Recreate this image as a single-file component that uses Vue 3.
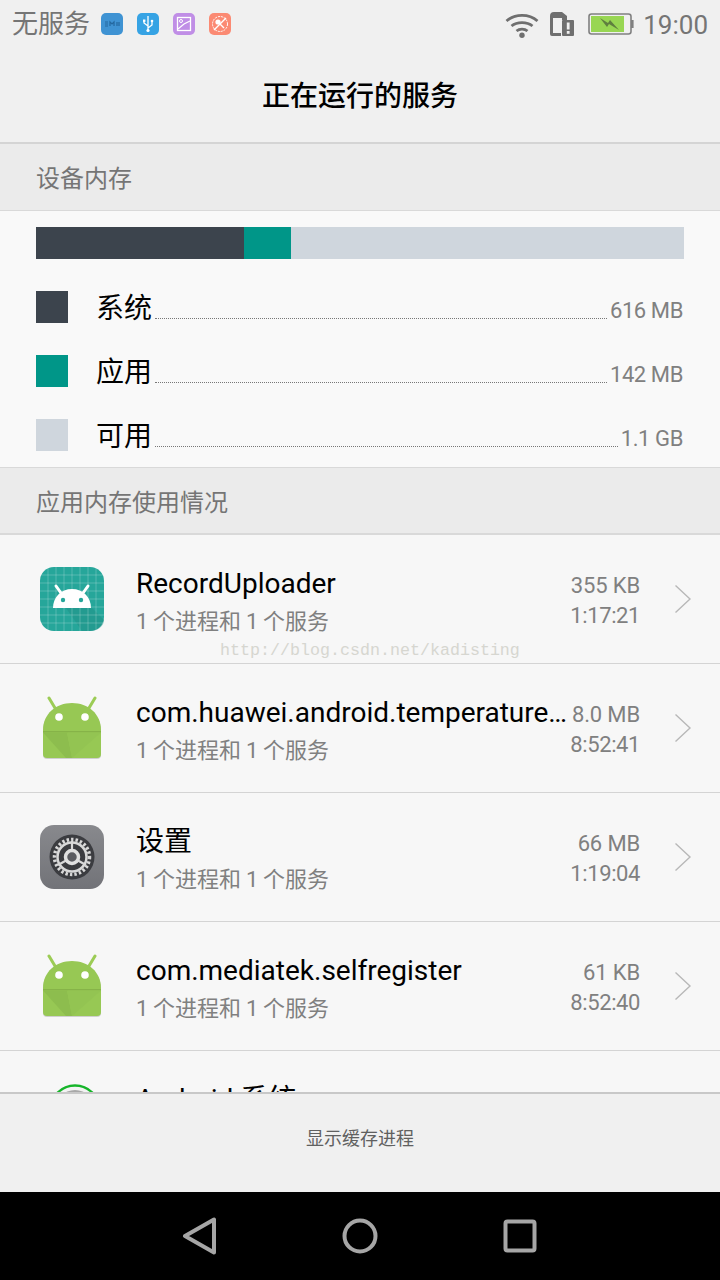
<template>
  <div class="phone">
    <div class="status-bar">
      <span class="carrier">无服务</span>
      <div class="notif-icons">
        <svg class="notif" viewBox="0 0 24 24" width="24" height="24">
          <rect x="1" y="1" width="22" height="22" rx="5" fill="#3f93d3"/>
          <path d="M5 10h3M5 12h3M5 14h3M10 14v-4l2 2 2-2v4M17 10v4M19 10v4" stroke="#24689f" stroke-width="1.2" fill="none"/>
        </svg>
        <svg class="notif" viewBox="0 0 24 24" width="24" height="24">
          <rect x="1" y="1" width="22" height="22" rx="5" fill="#36a3e4"/>
          <path d="M12 4v15M12 14l-4-3V9M12 16l4-3v-3" stroke="#fff" stroke-width="1.3" fill="none"/>
          <circle cx="12" cy="18.5" r="1.6" fill="#fff"/>
          <rect x="7" y="7.5" width="2.4" height="2.4" fill="#fff"/>
          <circle cx="16" cy="9" r="1.3" fill="#fff"/>
        </svg>
        <svg class="notif" viewBox="0 0 24 24" width="24" height="24">
          <rect x="1" y="1" width="22" height="22" rx="5" fill="#c08ee6"/>
          <rect x="5.5" y="5.5" width="13" height="13" fill="none" stroke="#fff" stroke-width="1.3"/>
          <circle cx="9" cy="9" r="1.5" fill="none" stroke="#fff" stroke-width="1"/>
          <path d="M6 17l6-5 6-3" stroke="#fff" stroke-width="1.2" fill="none"/>
        </svg>
        <svg class="notif" viewBox="0 0 24 24" width="24" height="24">
          <rect x="1" y="1" width="22" height="22" rx="5" fill="#fb8a73"/>
          <circle cx="12" cy="12" r="7.5" fill="none" stroke="#fff" stroke-width="1" stroke-dasharray="2 1"/>
          <circle cx="10" cy="10" r="2.6" fill="#fff"/>
          <path d="M11 11l5 5M6 18L18 6" stroke="#fff" stroke-width="1.4"/>
        </svg>
      </div>
      <div class="status-right">
        <svg class="wifi" viewBox="0 0 34 26" width="34" height="26">
          <path d="M1.5 9C10 1.5 24 1.5 32.5 9M6.5 14C12 9.5 22 9.5 27.5 14M11.5 19C14.5 16.5 19.5 16.5 22.5 19" stroke="#6f6f6f" stroke-width="2.8" fill="none"/>
          <circle cx="17" cy="23.2" r="2.7" fill="#6f6f6f"/>
        </svg>
        <svg class="sim" viewBox="0 0 24 24" width="24" height="24">
          <path d="M4 0h8l5 4v4h-6v16H2a2 2 0 0 1-2-2V4a4 4 0 0 1 4-4z" fill="#6f6f6f"/>
          <rect x="3" y="6" width="9" height="15" fill="#f0f0f0"/>
          <rect x="12" y="8" width="12" height="16" rx="1" fill="#6f6f6f"/>
          <rect x="16.8" y="10.5" width="2.8" height="7" fill="#f0f0f0"/>
          <rect x="16.8" y="19" width="2.8" height="2.8" fill="#f0f0f0"/>
        </svg>
        <svg class="battery" viewBox="0 0 46 22" width="46" height="22">
          <rect x="1" y="1" width="42" height="20" rx="2.5" fill="none" stroke="#808080" stroke-width="1.6"/>
          <rect x="3" y="3" width="33" height="16" fill="#98d653"/>
          <path d="M43 7h2.6v8H43z" fill="#808080"/>
          <path d="M12 5l8 5 2-3 9 10-10-6-2 3z" fill="#5f7f3f"/>
        </svg>
        <span class="clock">19:00</span>
      </div>
    </div>

    <div class="title-bar">正在运行的服务</div>

    <div class="section-head section-head-1">设备内存</div>
    <div class="memory">
      <div class="mem-bar">
        <div class="seg seg-system"></div>
        <div class="seg seg-app"></div>
        <div class="seg seg-free"></div>
      </div>
      <div v-for="m in memory" :key="m.label" class="mem-row">
        <span class="swatch" :class="m.cls"></span>
        <span class="mem-label">{{ m.label }}</span>
        <span class="dots"></span>
        <span class="mem-value">{{ m.value }}</span>
      </div>
    </div>

    <div class="section-head section-head-2">应用内存使用情况</div>

    <div class="list">
      <div v-for="app in apps" :key="app.name" class="row">
        <div class="app-icon">
          <svg v-if="app.icon === 'teal'" viewBox="0 0 64 64" width="64" height="64">
            <rect x="0" y="0" width="64" height="64" rx="14" fill="#26a69a"/>
            <path d="M26 41h26l12 12v0a14 11 0 0 1-14 11H42z" fill="#1f8f85" opacity=".5"/>
            <path d="M8 0v64M16 0v64M24 0v64M32 0v64M40 0v64M48 0v64M56 0v64M0 8h64M0 16h64M0 24h64M0 32h64M0 40h64M0 48h64M0 56h64" stroke="#fff" stroke-opacity=".22" stroke-width="1"/>
            <path d="M13 41c0-11 8-19 19-19s19 8 19 19z" fill="#fff"/>
            <path d="M21 26l-5-7M43 26l5-7" stroke="#fff" stroke-width="3" stroke-linecap="round"/>
            <circle cx="23" cy="33" r="2.2" fill="#26a69a"/>
            <circle cx="41" cy="33" r="2.2" fill="#26a69a"/>
          </svg>
          <svg v-else-if="app.icon === 'droid'" viewBox="0 0 64 64" width="64" height="64">
            <path d="M15 12L9 2M49 12l6-10" stroke="#9ccc55" stroke-width="3" stroke-linecap="round"/>
            <path d="M3 35C3 19 16 8 32 8s29 11 29 27v24a4 4 0 0 1-4 4H7a4 4 0 0 1-4-4z" fill="#cfcfcf"/>
            <path d="M3 34C3 18 16 7 32 7s29 11 29 27v24a4 4 0 0 1-4 4H7a4 4 0 0 1-4-4z" fill="#97c854"/>
            <path d="M3 35h58v1.5H3z" fill="#86b348"/>
            <path d="M3 36.500h24L32 62H26z" fill="#8dbd4e"/>
            <path d="M27 36.500h34L32 62z" fill="#93c452"/>
            <circle cx="19" cy="21" r="3.8" fill="#fff"/>
            <circle cx="45" cy="21" r="3.8" fill="#fff"/>
          </svg>
          <svg v-else viewBox="0 0 64 64" width="64" height="64">
            <defs>
              <linearGradient id="gear-bg" x1="0" y1="0" x2="0" y2="1">
                <stop offset="0" stop-color="#88898d"/>
                <stop offset="1" stop-color="#727378"/>
              </linearGradient>
            </defs>
            <rect x="0" y="0" width="64" height="64" rx="14" fill="url(#gear-bg)"/>
            <circle cx="32" cy="32" r="22.5" fill="#3b3c40"/>
            <circle cx="32" cy="32" r="17.500" fill="none" stroke="#d8d8d8" stroke-width="3.5" stroke-dasharray="2.4 2.1"/>
            <circle cx="32" cy="32" r="14.5" fill="none" stroke="#d8d8d8" stroke-width="2.5"/>
            <path d="M32 16v10M18 40l9-5M46 40l-9-5" stroke="#d8d8d8" stroke-width="2.2"/>
            <circle cx="32" cy="32" r="6.5" fill="#5a5b60" stroke="#e0e0e0" stroke-width="3.5"/>
          </svg>
        </div>
        <div class="app-text">
          <div class="app-name">{{ app.name }}</div>
          <div class="app-sub">1 个进程和 1 个服务</div>
        </div>
        <div class="app-meta">
          <div class="app-size">{{ app.size }}</div>
          <div class="app-time">{{ app.time }}</div>
        </div>
        <svg class="chevron" viewBox="0 0 18 30" width="18" height="30">
          <path d="M1.5 1.5L16 15 1.5 28.5" stroke="#b8b8b8" stroke-width="1.4" fill="none"/>
        </svg>
      </div>
      <div class="row row-cut">
        <div class="app-icon">
          <svg viewBox="0 0 64 64" width="64" height="64">
            <circle cx="35" cy="26" r="24.500" fill="#f3f3f3" stroke="#16b52a" stroke-width="2.4"/>
            <circle cx="35" cy="26" r="20" fill="#a8a8a8"/>
          </svg>
        </div>
        <div class="app-text">
          <div class="app-name">Android 系统</div>
        </div>
      </div>
      <span class="watermark">http://blog.csdn.net/kadisting</span>
    </div>

    <div class="footer">显示缓存进程</div>

    <div class="nav-bar">
      <svg viewBox="0 0 36 38" width="36" height="38">
        <path d="M3 19L32 2.5v33z" fill="none" stroke="#a6a6a6" stroke-width="4" stroke-linejoin="round"/>
      </svg>
      <svg viewBox="0 0 36 36" width="36" height="36">
        <circle cx="18" cy="18" r="15.5" fill="none" stroke="#a6a6a6" stroke-width="4"/>
      </svg>
      <svg class="nav-recent" viewBox="0 0 34 34" width="34" height="34">
        <rect x="2.500" y="2.500" width="29" height="29" rx="2" fill="none" stroke="#a6a6a6" stroke-width="4"/>
      </svg>
    </div>
  </div>
</template>

<script setup>
const memory = [
  { label: '系统', value: '616 MB', cls: 'seg-system' },
  { label: '应用', value: '142 MB', cls: 'seg-app' },
  { label: '可用', value: '1.1 GB', cls: 'seg-free' }
]

const apps = [
  { name: 'RecordUploader', size: '355 KB', time: '1:17:21', icon: 'teal' },
  { name: 'com.huawei.android.temperature…', size: '8.0 MB', time: '8:52:41', icon: 'droid' },
  { name: '设置', size: '66 MB', time: '1:19:04', icon: 'gear' },
  { name: 'com.mediatek.selfregister', size: '61 KB', time: '8:52:40', icon: 'droid' }
]
</script>

<style>
body {
  margin: 0;
  background: #f7f7f7;
}
</style>

<style scoped>
.phone {
  width: 720px;
  height: 1280px;
  display: flex;
  flex-direction: column;
  overflow: hidden;
  font-family: Roboto, "Noto Sans CJK SC", sans-serif;
  background: #f7f7f7;
}

.status-bar {
  height: 48px;
  flex-shrink: 0;
  display: flex;
  align-items: center;
  padding: 0 12px;
  background: #f0f0f0;
  color: #757575;
}

.carrier {
  font-size: 26px;
  line-height: 30px;
  width: 78px;
}

.notif-icons {
  display: flex;
  gap: 12px;
  margin-left: 10px;
}

.status-right {
  margin-left: auto;
  display: flex;
  align-items: center;
}

.wifi {
  margin-top: 2px;
}

.sim {
  margin-left: 11px;
}

.battery {
  margin-left: 14px;
}

.clock {
  font-size: 26px;
  line-height: 30px;
  margin-left: 9px;
  padding-top: 2px;
}

.title-bar {
  height: 96px;
  flex-shrink: 0;
  box-sizing: border-box;
  display: flex;
  align-items: center;
  justify-content: center;
  padding-bottom: 2px;
  font-size: 28px;
  font-weight: 500;
  color: #000;
  background: #f0f0f0;
  border-bottom: 2px solid #d4d4d4;
}

.section-head {
  height: 67px;
  flex-shrink: 0;
  box-sizing: border-box;
  display: flex;
  align-items: center;
  padding: 0 36px;
  font-size: 24px;
  color: #757575;
  background: #ebebeb;
  border-bottom: 1px solid #d9d9d9;
}

.section-head-1 {
  padding-bottom: 2px;
}

.section-head-2 {
  height: 68px;
  border-top: 1px solid #d9d9d9;
  border-bottom: 2px solid #d9d9d9;
}

.memory {
  height: 256px;
  flex-shrink: 0;
  box-sizing: border-box;
  padding: 16px 36px 0;
  background: #f9f9f9;
}

.mem-bar {
  display: flex;
  height: 32px;
  margin-bottom: 32px;
}

.seg-system {
  background: #3c444d;
}

.seg-app {
  background: #009688;
}

.seg-free {
  background: #cfd6dd;
}

.mem-bar .seg-system {
  width: 208px;
}

.mem-bar .seg-app {
  width: 47px;
}

.mem-bar .seg-free {
  flex: 1;
}

.mem-row {
  height: 32px;
  margin-bottom: 32px;
  display: flex;
  align-items: flex-end;
}

.swatch {
  width: 32px;
  height: 32px;
  flex-shrink: 0;
}

.mem-label {
  font-size: 28px;
  line-height: 36px;
  margin-left: 28px;
  margin-bottom: -4px;
  color: #000;
}

.dots {
  flex: 1;
  height: 0;
  margin: 0 3px 4px 3px;
  border-bottom: 1px dotted #777;
}

.mem-value {
  font-size: 22px;
  letter-spacing: -0.4px;
  line-height: 26px;
  color: #808080;
  margin-bottom: -1px;
  margin-right: 1px;
}

.list {
  flex: 1;
  min-height: 0;
  overflow: hidden;
  position: relative;
  background: #f7f7f7;
}

.row {
  height: 129px;
  box-sizing: border-box;
  display: flex;
  align-items: center;
  padding: 0 28px 0 40px;
  border-bottom: 1px solid #d4d4d4;
}

.app-icon {
  width: 64px;
  height: 64px;
  flex-shrink: 0;
  margin-right: 32px;
}

.app-icon svg {
  display: block;
}

.app-text {
  flex: 1;
  min-width: 0;
  padding-top: 5px;
}

.app-name {
  font-size: 28px;
  line-height: 34px;
  color: #000;
  white-space: nowrap;
}

.app-sub {
  font-size: 22px;
  line-height: 28px;
  margin-top: 7px;
  word-spacing: -0.7px;
  color: #808080;
}

.app-meta {
  width: 80px;
  flex-shrink: 0;
  margin-left: -10px;
  padding-top: 4px;
  text-align: right;
  font-size: 22px;
  line-height: 30px;
  color: #808080;
}

.app-size {
  letter-spacing: -0.15px;
}

.app-time {
  letter-spacing: -0.4px;
}

.chevron {
  margin-left: 34px;
  flex-shrink: 0;
}

.row-cut {
  align-items: flex-start;
  padding-top: 33px;
}

.row-cut .app-text {
  padding-top: 0;
  margin-top: -1px;
}

.watermark {
  position: absolute;
  left: 220px;
  top: 106px;
  font-family: "Liberation Mono", monospace;
  font-size: 16.67px;
  color: #d6d6d0;
}

.footer {
  height: 100px;
  flex-shrink: 0;
  box-sizing: border-box;
  display: flex;
  align-items: center;
  justify-content: center;
  padding-bottom: 12px;
  font-size: 18px;
  color: #606060;
  background: #f0f0f0;
  border-top: 2px solid #c8c8c8;
}

.nav-bar {
  height: 88px;
  flex-shrink: 0;
  box-sizing: border-box;
  display: flex;
  align-items: center;
  justify-content: center;
  gap: 124px;
  padding-right: 1px;
  background: #000;
}

.nav-recent {
  margin-left: 1px;
}
</style>
